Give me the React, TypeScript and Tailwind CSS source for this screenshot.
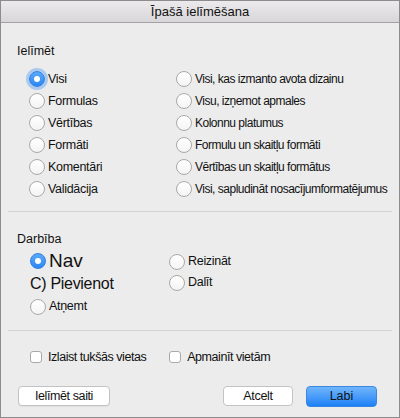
import React from 'react';

/**
 * Īpašā ielīmēšana – Paste Special dialog
 */

const FONT = { fontFamily: '"Liberation Sans", Arial, sans-serif' };

interface RadioProps {
  label: string;
  checked?: boolean;
  focused?: boolean;
  className?: string;
  textClass?: string;
}

function Radio({
  label,
  checked,
  focused,
  className = '',
  textClass = 'text-[12.5px] tracking-[-0.3px]',
}: RadioProps) {
  return (
    <div className={`flex items-center gap-[3px] ${className}`}>
      {checked ? (
        <span
          className={`relative flex w-[16px] h-[16px] shrink-0 items-center justify-center rounded-full bg-gradient-to-b from-[#5aa9fb] to-[#2a88f3] border border-[#2f7fe0] ${
            focused ? 'shadow-[0_0_0_3px_rgba(90,160,245,0.45)]' : ''
          }`}
        >
          <span className="w-[6px] h-[6px] rounded-full bg-white" />
        </span>
      ) : (
        <span className="w-[16px] h-[16px] shrink-0 rounded-full bg-gradient-to-b from-white to-[#f4f4f4] border border-[#a9a9a9]" />
      )}
      <span className={`text-[#111] whitespace-nowrap ${textClass}`}>{label}</span>
    </div>
  );
}

function Checkbox({ label }: { label: string }) {
  return (
    <div className="flex items-center gap-[6px]">
      <span className="w-[12px] h-[12px] rounded-[3px] bg-white border border-[#a9a9a9]" />
      <span className="text-[12.5px] text-[#111] tracking-[-0.45px] whitespace-nowrap">{label}</span>
    </div>
  );
}

const leftPaste = ['Visi', 'Formulas', 'Vērtības', 'Formāti', 'Komentāri', 'Validācija'];
const rightPaste = [
  'Visi, kas izmanto avota dizainu',
  'Visu, izņemot apmales',
  'Kolonnu platumus',
  'Formulu un skaitļu formāti',
  'Vērtības un skaitļu formātus',
  'Visi, sapludināt nosacījumformatējumus',
];

export default function App() {
  return (
    <div
      style={FONT}
      className="w-[400px] h-[418px] flex flex-col border border-[#8c8c8c] bg-[#ececec] overflow-hidden"
    >
      {/* Title bar */}
      <div className="h-[22px] shrink-0 flex items-center justify-center bg-gradient-to-b from-[#eceaec] to-[#d8d6d8] border-b border-[#a3a3a3]">
        <span className="text-[13px] text-[#111]">Īpašā ielīmēšana</span>
      </div>

      {/* Ielīmēt */}
      <div className="px-[16px] mt-[20px]">
        <div className="text-[12.5px] text-[#111] leading-[16px]">Ielīmēt</div>
        <div className="grid grid-cols-[147px_1fr] mt-[9px] pl-[12px]">
          <div className="flex flex-col">
            {leftPaste.map((l, i) => (
              <Radio key={l} label={l} checked={i === 0} focused={i === 0} className="h-[22px]" />
            ))}
          </div>
          <div className="flex flex-col">
            {rightPaste.map((l) => (
              <Radio
                key={l}
                label={l}
                className="h-[22px]"
                textClass="text-[12px] tracking-[-0.5px]"
              />
            ))}
          </div>
        </div>
      </div>

      <div className="mx-[7px] mt-[11px] h-px bg-[#d2d2d2]" />

      {/* Darbība */}
      <div className="px-[16px] mt-[19px]">
        <div className="text-[12.5px] text-[#111] leading-[16px]">Darbība</div>
        <div className="grid grid-cols-[152px_1fr] mt-[2px]">
          <div className="flex flex-col">
            <Radio
              label="Nav"
              checked
              className="h-[24px] pl-[13px]"
              textClass="text-[19px] leading-[24px] tracking-[0px]"
            />
            <div className="h-[21px] pl-[13px] flex items-center text-[16px] text-[#111] tracking-[-0.3px]">
              C) Pievienot
            </div>
            <Radio label="Atņemt" className="h-[23px] pt-[2px] pl-[13px]" />
          </div>
          <div className="flex flex-col pt-[2px]">
            <Radio label="Reizināt" className="h-[21px]" />
            <Radio label="Dalīt" className="h-[21px]" />
          </div>
        </div>
      </div>

      <div className="mx-[7px] mt-[13px] h-px bg-[#d2d2d2]" />

      {/* Options */}
      <div className="flex items-center mt-[17px] pl-[29px] gap-[23px]">
        <Checkbox label="Izlaist tukšās vietas" />
        <Checkbox label="Apmainīt vietām" />
      </div>

      {/* Buttons */}
      <div className="flex items-center mt-[19px] px-[17px]">
        <button className="w-[92px] h-[20px] rounded-[4px] bg-white border border-[#c3c3c3] text-[12.5px] text-[#111] tracking-[-0.4px] shadow-[0_1px_0_rgba(0,0,0,0.05)]">
          Ielīmēt saiti
        </button>
        <div className="flex-1" />
        <button className="w-[70px] h-[20px] rounded-[4px] bg-white border border-[#c3c3c3] text-[12.5px] text-[#111] tracking-[-0.3px]">
          Atcelt
        </button>
        <button className="ml-[13px] w-[71px] h-[21px] rounded-[4px] bg-gradient-to-b from-[#6fb6fb] to-[#1a80f6] border border-[#3a86e0] text-[12.5px] text-[#111]">
          Labi
        </button>
        <div className="w-[5px]" />
      </div>
    </div>
  );
}
